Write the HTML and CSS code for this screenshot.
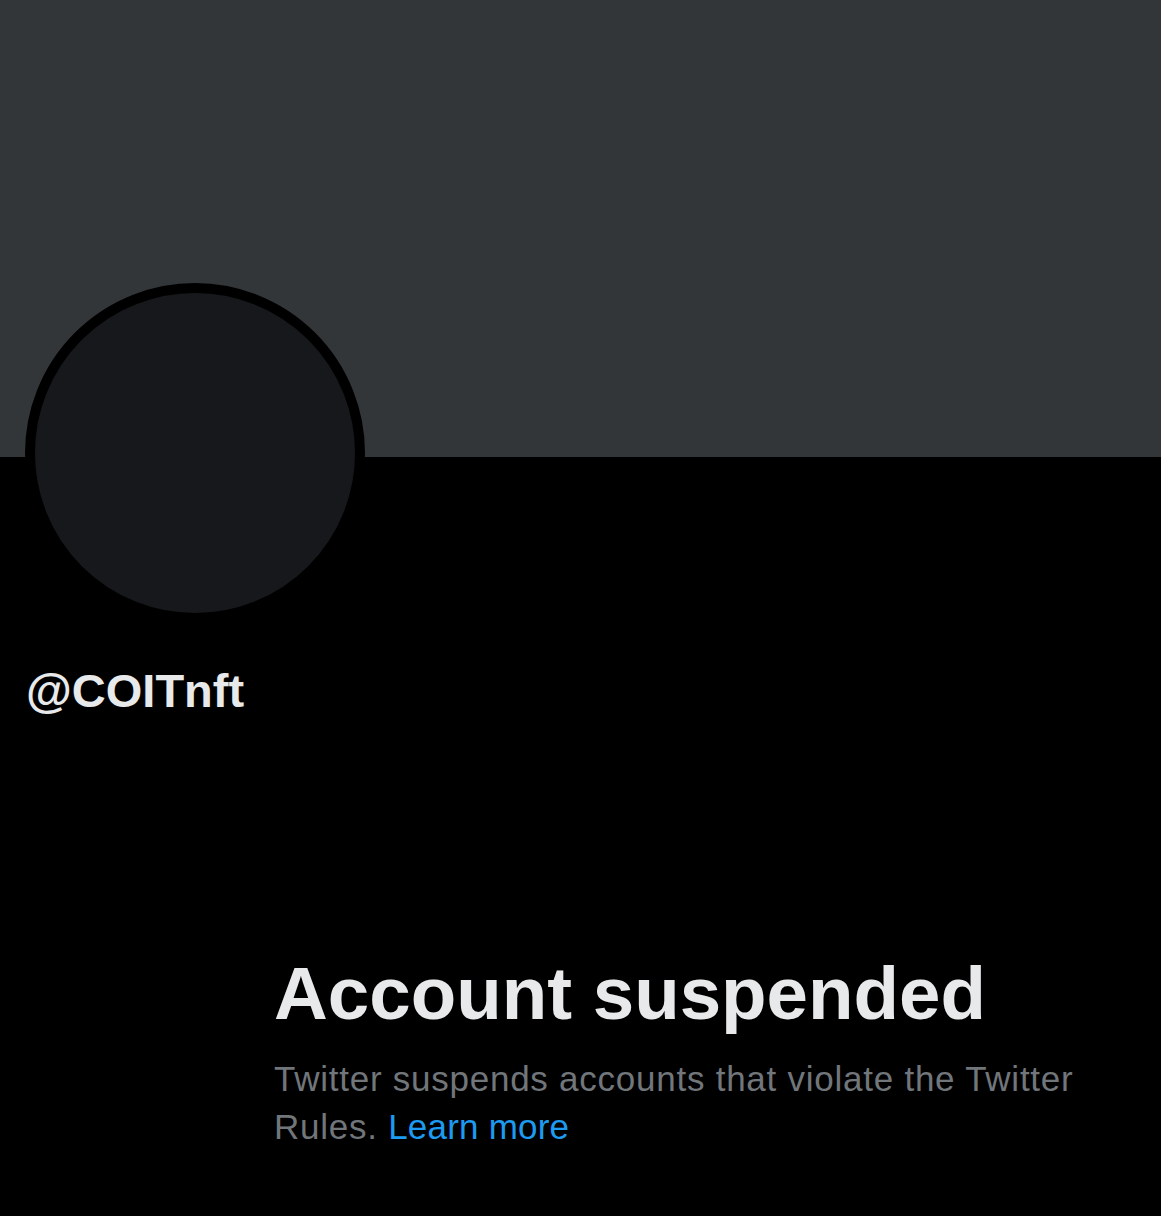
FILE: index.html
```html
<!DOCTYPE html>
<html lang="en">
<head>
  <meta charset="UTF-8">
  <title>@COITnft</title>
  <link rel="stylesheet" href="styles.css">
</head>
<body>

<div class="profile">
  <!--banner-->
  <div class="banner"></div>

  <!--avatar + handle-->
  <div class="info">
    <div class="avatar"></div>
    <div class="handle">@COITnft</div>
  </div>

  <!--suspended notice-->
  <div class="notice">
    <h1>Account suspended</h1>
    <p>Twitter suspends accounts that violate the Twitter Rules. <a href="#">Learn more</a></p>
  </div>
</div>

</body>
</html>
```

FILE: styles.css
```css
* {
  margin: 0;
  padding: 0;
  box-sizing: border-box;
}

body {
  background-color: #000;
  font-family: "Liberation Sans", Arial, sans-serif;
  color: #e7e9ea;
}

.profile {
  width: 1161px;
  height: 1216px;
  overflow: hidden;
}

.banner {
  height: 457px;
  background-color: #333639;
}

.info {
  padding-left: 25px;
}

/*头像压在banner上*/
.avatar {
  width: 340px;
  height: 340px;
  margin-top: -174px;
  border-radius: 50%;
  border: 10px solid #000;
  background-color: #16181c;
}

.handle {
  margin-top: 40px;
  padding-left: 1px;
  font-size: 47px;
  line-height: 56px;
  font-weight: bold;
}

.notice {
  width: 840px;
  margin: 231px 0 0 274px;
}

.notice h1 {
  font-size: 74.5px;
  line-height: 88px;
  font-weight: bold;
}

.notice p {
  margin-top: 17px;
  font-size: 35px;
  line-height: 48px;
  letter-spacing: 0.75px;
  color: #71767b;
}

.notice a {
  color: #1d9bf0;
  letter-spacing: 0.2px;
  text-decoration: none;
}
```
